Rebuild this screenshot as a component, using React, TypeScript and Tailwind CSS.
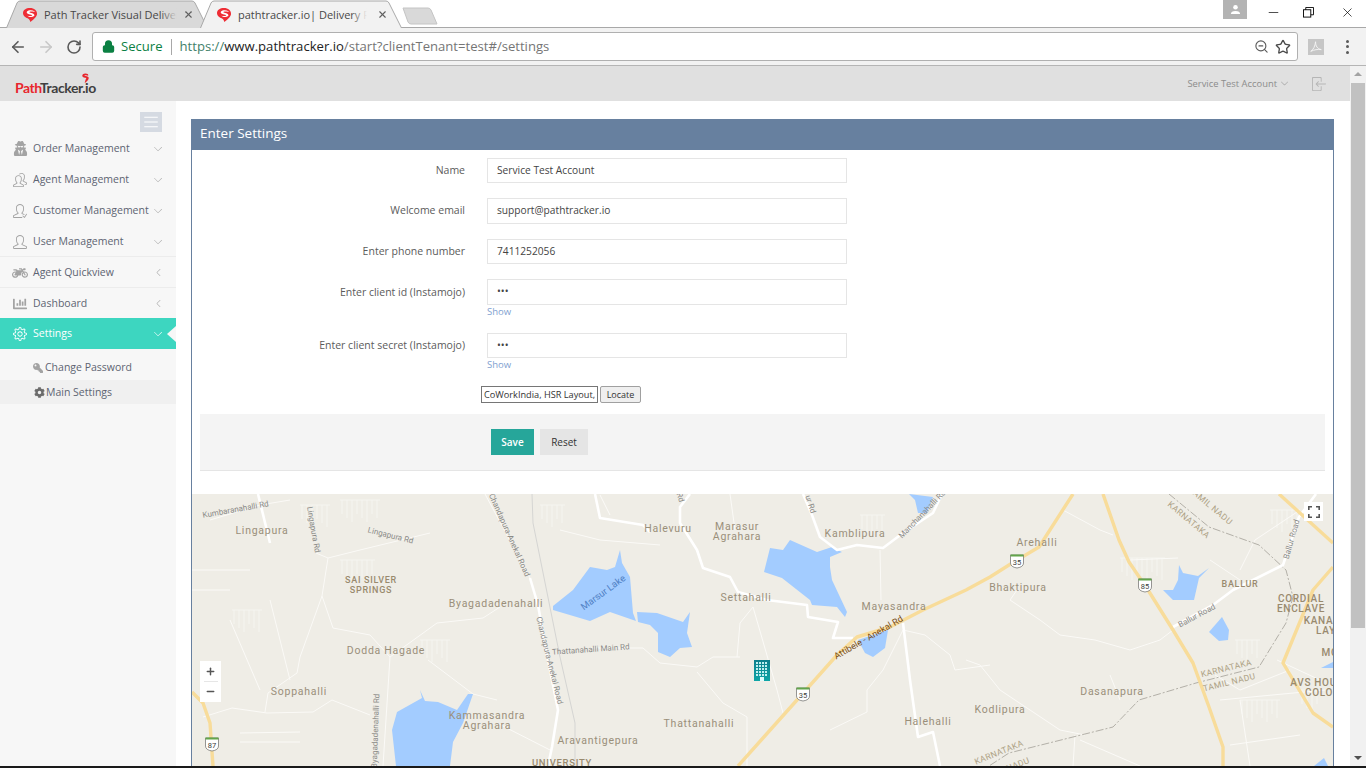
import { ArrowLeft, ArrowRight, RotateCw, Lock, ZoomOut, Star, Minus, Plus, X } from "lucide-react";
import {
  SlPeople,
  SlUserFollowing,
  SlUser,
  SlSettings,
  SlArrowDown,
  SlArrowLeft,
  SlMenu,
  SlLogin,
} from "react-icons/sl";
import { FaUserSecret, FaMotorcycle, FaChartBar, FaKey, FaCog } from "react-icons/fa";
import type { ReactNode } from "react";

const menu = [
  { label: "Order Management", icon: <FaUserSecret size={15} />, open: true, h: "h-[31px]" },
  { label: "Agent Management", icon: <SlPeople size={14} />, open: true, h: "h-[31px]" },
  { label: "Customer Management", icon: <SlUserFollowing size={14} />, open: true, h: "h-[31px]" },
  { label: "User Management", icon: <SlUser size={14} />, open: true, line: true, h: "h-[31px] pt-[1px]" },
  { label: "Agent Quickview", icon: <FaMotorcycle size={16} />, open: false, line: true, h: "h-[31px] pt-[1px]" },
  { label: "Dashboard", icon: <FaChartBar size={14} />, open: false, h: "h-[30px] pt-[1px]" },
];

const fields = [
  { label: "Name", value: "Service Test Account", h: "h-[25px]", mb: "mb-[15px]", pt: "pt-[4px]" },
  { label: "Welcome email", value: "support@pathtracker.io", h: "h-[26px]", mb: "mb-[15px]", pt: "pt-[4px]" },
  { label: "Enter phone number", value: "7411252056", h: "h-[25px]", mb: "mb-[15px]", pt: "pt-[4px]" },
  { label: "Enter client id (Instamojo)", value: "•••", h: "h-[26px]", mb: "mb-[15px]", pt: "pt-[5px]", show: true },
  { label: "Enter client secret (Instamojo)", value: "•••", h: "h-[25px]", mb: "mb-[15px]", pt: "pt-[4px]", show: true },
];

const lakes = [
  "590,567 607,570 615,567 620,550 622,563 630,577 633,613 636,621 610,612 590,621 553,610 553,606 573,590",
  "637,612 657,613 683,622 690,612 687,633 692,647 680,648 670,657 658,652 658,633 650,625 638,622",
  "770,548 783,550 790,540 817,552 832,547 842,552 830,557 830,567 832,580 847,612 845,617 837,607 812,605 810,600 782,578 764,572",
  "858,640 888,630 885,648 873,657 865,653",
  "909,494 933,497 927,513 918,513 915,500",
  "420,690 422,698 397,712 392,730 396,766 450,766 453,742 463,723 473,694 468,694 457,710 438,702 425,701",
  "1179,565 1183,573 1198,576 1209,568 1199,578 1194,600 1173,600 1163,590 1173,590 1178,580",
  "1222,617 1229,630 1228,640 1219,641 1209,632",
  "1321,668 1333,662 1333,668",
  "1314,766 1324,758 1328,766",
];

const highways = [
  "192,692 203,703 210,723 213,766",
  "738,766 797,700 837,655 857,637 890,627 923,610 966,590 990,577 1009,565 1039,547 1073,494",
  "1103,494 1119,540 1129,562 1148,590 1173,630 1193,663 1209,707 1223,747 1223,766",
  "1279,494 1333,543",
  "1333,567 1313,590 1283,663 1313,713 1333,727",
];

const mainRoads = [
  "258,494 270,543",
  "530,578 538,605 546,650 558,710 552,747 548,766",
  "595,494 600,518 643,525 650,532",
  "690,494 680,507 680,523 697,550 703,568 730,577 738,592 767,600 807,605 808,617 838,622 833,638 853,638",
  "803,494 812,515 820,537 837,550 857,545 883,548 903,533 933,513 942,494",
  "903,623 910,680 918,737 933,732 940,766",
  "1173,627 1213,605 1233,590 1283,565 1299,517 1316,494",
];

const thinRoads = [
  "485,494 530,578",
  "316,553 328,558 360,550 430,533",
  "328,558 322,596 333,628 370,635 390,657 383,766",
  "322,596 300,657 297,673 268,693 265,712",
  "203,717 232,708 267,713 313,712 332,700 370,715",
  "390,657 437,623 483,618 500,607",
  "428,660 473,694 497,700",
  "497,723 550,750",
  "240,733 300,732",
  "240,742 300,742",
  "590,648 643,648 660,663 697,667 713,657 740,657",
  "697,672 723,703 747,717 747,766",
  "753,607 740,623 737,657",
  "753,607 777,690 783,713",
  "880,550 881,600",
  "903,630 883,670 867,690 867,712 830,730",
  "903,630 925,635 950,655 955,670 990,665",
  "1063,510 1100,530 1113,535",
  "1017,590 1010,600 1040,620 1060,635 1095,640 1130,650 1160,640 1173,630",
  "966,660 980,665 1000,690 1060,730 1085,735",
  "1075,735 1073,766",
  "1080,740 1140,766",
  "1130,560 1178,558",
  "1215,675 1240,690 1290,670",
  "1220,700 1325,690",
  "1230,745 1300,735",
  "1240,700 1250,766",
  "1277,660 1320,680",
  "1240,570 1255,540 1300,510",
  "1210,560 1240,580",
  "210,520 260,505 290,500",
  "192,570 250,570",
  "192,590 230,590",
  "230,620 260,690",
  "270,600 290,680",
  "560,530 600,540 660,545",
  "600,495 610,515",
  "730,494 735,530",
  "1110,675 1120,700",
];

// short side streets, drawn as comb shapes
const combs = [
  [340, 500, 8],
  [300, 505, 6],
  [340, 560, 7],
  [232, 610, 6],
  [420, 640, 6],
  [540, 505, 5],
  [1120, 558, 9],
  [1235, 640, 5],
  [1270, 510, 6],
  [1240, 700, 8],
  [1300, 690, 4],
  [860, 515, 5],
];

const places = [
  ["Lingapura", 262, 534],
  ["Byagadadenahalli", 496, 607],
  ["Dodda Hagade", 386, 654],
  ["Soppahalli", 299, 695],
  ["Kammasandra", 487, 719],
  ["Agrahara", 487, 729],
  ["Aravantigepura", 598, 744],
  ["Halevuru", 668, 532],
  ["Marasur", 737, 530],
  ["Agrahara", 737, 540],
  ["Kamblipura", 855, 537],
  ["Settahalli", 746, 601],
  ["Mayasandra", 894, 610],
  ["Thattanahalli", 699, 727],
  ["Halehalli", 928, 725],
  ["Arehalli", 1037, 546],
  ["Bhaktipura", 1018, 591],
  ["Dasanapura", 1112, 695],
  ["Kodlipura", 1000, 713],
];

const districts: [string, number, number, number][] = [
  ["SAI SILVER", 371, 583, 9],
  ["SPRINGS", 371, 593, 9],
  ["BALLUR", 1240, 587, 9],
  ["CORDIAL", 1301, 602, 10],
  ["ENCLAVE", 1301, 612, 10],
  ["KANAK", 1322, 624, 10],
  ["LAY", 1326, 634, 10],
  ["MO", 1330, 656, 10],
  ["AVS HOUS", 1317, 686, 10],
  ["COLON", 1323, 696, 10],
  ["UNIVERSITY", 562, 766, 9.5],
];

const roadNames: [string, number, number, number][] = [
  ["Kumbaranahalli Rd", 236, 512, -10],
  ["Lingapura Rd", 311, 530, 80],
  ["Lingapura Rd", 390, 538, 14],
  ["Chandapura-Anekal Road", 507, 536, 66],
  ["Chandapura-Anekal Road", 547, 661, 76],
  ["Byagadadenahalli Rd", 378, 731, -88],
  ["Thattanahalli Main Rd", 591, 652, -4],
  ["Manchanahalli Rd", 924, 516, -46],
  ["Ballur Road", 1198, 618, -28],
  ["Ballur Road", 1294, 540, -74],
  ["ur Rd", 808, 505, 72],
  ["Rd", 678, 498, 72],
];

const borders: [string, number, number, number][] = [
  ["KARNATAKA", 1187, 522, 40],
  ["TAMIL NADU", 1209, 508, 40],
  ["KARNATAKA", 1227, 671, -14],
  ["TAMIL NADU", 1230, 685, -14],
  ["KARNATAKA", 1000, 755, -22],
  ["NADU", 1019, 767, -22],
];

const shields: [string, number, number][] = [
  ["35", 803, 694],
  ["35", 1017, 561],
  ["85", 1145, 585],
  ["87", 212, 744],
];

function MapDrawing() {
  return (
    <svg viewBox="192 494 1141 272" className="block h-full w-full" style={{ fontFamily: "Roboto, sans-serif" }}>
      <rect x="192" y="494" width="1141" height="272" fill="#efede6" />
      {combs.map(([x, y, n], i) => (
        <g key={i} stroke="#f8f7f2" strokeWidth="0.8" fill="none">
          <path d={`M${x} ${y}h${n * 5}`} />
          {Array.from({ length: n }).map((_, j) => (
            <path key={j} d={`M${x + j * 5 + 2} ${y}v${14 + (j % 3) * 4}`} />
          ))}
        </g>
      ))}
      {thinRoads.map((p, i) => (
        <polyline key={i} points={p} fill="none" stroke="#fbfaf7" strokeWidth="1" />
      ))}
      <polyline points="532,494 533,523 560,657 575,723 575,766" fill="none" stroke="#d5d5d3" strokeWidth="1" />
      <polyline
        points="1169,494 1209,527 1259,545 1286,570 1293,597 1286,623 1259,667 1196,683 1139,700 1113,727 1009,753 989,766"
        fill="none"
        stroke="#b3b0a8"
        strokeWidth="1"
        strokeDasharray="8 2 2 2"
      />
      {lakes.map((p, i) => (
        <polygon key={i} points={p} fill="#a3ccff" />
      ))}
      {mainRoads.map((p, i) => (
        <polyline key={i} points={p} fill="none" stroke="#ffffff" strokeWidth="2.6" strokeLinejoin="round" />
      ))}
      {highways.map((p, i) => (
        <polyline key={i} points={p} fill="none" stroke="#f8dc9a" strokeWidth="3.4" strokeLinejoin="round" />
      ))}
      <g fill="#9a8f7a" fontSize="10.5" letterSpacing="0.75" textAnchor="middle">
        {places.map(([t, x, y], i) => (
          <text key={i} x={x} y={y}>
            {t}
          </text>
        ))}
      </g>
      <g fill="#998a6e" fontWeight="500" letterSpacing="0.7" textAnchor="middle">
        {districts.map(([t, x, y, s], i) => (
          <text key={i} x={x} y={y} fontSize={s}>
            {t}
          </text>
        ))}
      </g>
      <g fill="#8a8a87" fontSize="8" textAnchor="middle">
        {roadNames.map(([t, x, y, r], i) => (
          <text key={i} x={x} y={y} transform={`rotate(${r} ${x} ${y})`}>
            {t}
          </text>
        ))}
      </g>
      <g fill="#ada184" fontSize="8.5" letterSpacing="0.4" textAnchor="middle">
        {borders.map(([t, x, y, r], i) => (
          <text key={i} x={x} y={y} transform={`rotate(${r} ${x} ${y})`}>
            {t}
          </text>
        ))}
      </g>
      <text x="605" y="595" fill="#4f80c4" fontSize="9.5" textAnchor="middle" transform="rotate(-36 605 595)">
        Marsur Lake
      </text>
      <text x="870" y="640" fill="#7a4d14" fontSize="9" textAnchor="middle" transform="rotate(-30 870 640)">
        Attibele - Anekal Rd
      </text>
      {shields.map(([t, x, y], i) => (
        <g key={i}>
          <path
            d={`M${x - 6.5} ${y - 6}h13v8q0 4-6.5 5q-6.5-1-6.5-5z`}
            fill="#ffffff"
            stroke="#7b7b78"
            strokeWidth="0.8"
          />
          <rect x={x - 6.5} y={y - 6.5} width="13" height="2" fill="#63a54b" />
          <text x={x} y={y + 3.5} fontSize="7.5" textAnchor="middle" fill="#3c3c3c">
            {t}
          </text>
        </g>
      ))}
      <defs>
        <linearGradient id="bld" x1="0" y1="0" x2="0" y2="1">
          <stop offset="0" stopColor="#0e7f8c" />
          <stop offset="1" stopColor="#0ea5a6" />
        </linearGradient>
      </defs>
      <rect x="754" y="660" width="16" height="21" fill="url(#bld)" />
      {[0, 1, 2, 3, 4].flatMap((r) =>
        [0, 1, 2, 3].map((c) => (
          <rect key={`${r}-${c}`} x={756 + c * 3} y={662 + r * 3} width="2" height="2" fill="#bfeff0" />
        )),
      )}
      <rect x="760" y="677" width="4" height="4" fill="#dffcfc" />
    </svg>
  );
}

function Favicon() {
  return (
    <svg viewBox="0 0 16 16" className="h-[16px] w-[16px] shrink-0">
      <path
        d="M8 1C4 1 1 3 1 6c0 3 2.500 4.500 5 5.500 1 .4 2 1.500 2.300 3.500C10 13.500 14 11 15 7.500 15.500 3.500 12 1 8 1z"
        fill="#ee2d35"
      />
      <path
        d="M12.500 4.200C10 3 6.500 3 5 4.500c-1 1.200.5 2.300 2 2.700 1.500.4 3 .6 3.300 1.300-1.300.7-3 .7-5 .2 1.700 1.500 5 1.800 6.800.3 1-1-.2-2.300-1.800-2.800-1.300-.4-2.800-.6-3-1.200 1.300-.6 3.200-.6 5.200 0z"
        fill="#ffffff"
      />
    </svg>
  );
}

function Tab({ title, active, z }: { title: string; active?: boolean; z: string }) {
  return (
    <div className={`relative -mr-[8px] h-[28px] w-[202px] shrink-0 ${z}`}>
      <svg viewBox="0 0 202 28" className="absolute inset-0 h-full w-full">
        <path
          d="M0.5 28 L11 3 Q12 1 14 1 H186 Q188 1 189 3 L201.5 28"
          fill={active ? "#f2f2f2" : "#d9d9d9"}
          stroke="#a8a8a8"
        />
      </svg>
      <div className="absolute left-[16px] top-[7px] flex items-center gap-[6px]">
        <Favicon />
        <div
          className={`relative overflow-hidden whitespace-nowrap text-[11px] leading-[16px] text-[#484848] ${active ? "w-[129px]" : "w-[133px]"}`}
        >
          {title}
          <div
            className={`absolute right-0 top-0 h-full w-[16px] bg-gradient-to-r from-transparent ${active ? "to-[#f2f2f2]" : "to-[#d9d9d9]"}`}
          />
        </div>
      </div>
      <X className="absolute right-[14px] top-[9px] text-[#5f5f5f]" size={11} strokeWidth={2.4} />
    </div>
  );
}

function BrowserChrome() {
  return (
    <>
      <div className="relative flex h-[28px] bg-white pl-[6px]">
        <div className="absolute inset-x-0 bottom-0 h-[1px] bg-[#a8a8a8]" />
        <Tab title="Path Tracker Visual Delivery" z="z-0" />
        <Tab title="pathtracker.io| Delivery Platform" active z="z-10" />
        <svg viewBox="0 0 36 18" className="z-0 ml-[8px] mt-[7px] h-[18px] w-[36px]">
          <path d="M1 1H26Q28 1 29 3L35 17H9Q7 17 6 15Z" fill="#d9d9d9" stroke="#c4c4c4" />
        </svg>
        <div className="ml-auto mr-[10px] flex items-start">
          <div className="mr-[17px] flex h-[19px] w-[24px] items-center justify-center bg-[#b3b3b3]">
            <svg viewBox="0 0 12 12" className="h-[11px] w-[11px]" fill="#ffffff">
              <circle cx="6" cy="3.5" r="2.5" />
              <path d="M1 11q0-3.500 5-3.500t5 3.500z" />
            </svg>
          </div>
          <div className="flex h-[24px] w-[39px] items-center justify-start pl-[2px] text-black">
            <Minus size={15} strokeWidth={1.1} />
          </div>
          <div className="flex h-[24px] w-[37px] items-center justify-start text-black">
            <svg viewBox="0 0 12 12" className="h-[11px] w-[11px]" fill="none" stroke="#000000">
              <rect x="0.5" y="3" width="8" height="8" />
              <path d="M3 3V.5h8.500V8.500H8.500" />
            </svg>
          </div>
          <div className="flex h-[24px] w-[16px] items-center justify-start text-black">
            <X size={15} strokeWidth={1.1} />
          </div>
        </div>
      </div>
      <div className="flex h-[38px] items-center border-b border-[#b5b5b5] bg-[#f2f2f2] pl-[9px]">
        <ArrowLeft size={18} strokeWidth={2.2} className="text-[#5a5a5a]" />
        <ArrowRight size={18} strokeWidth={2.2} className="ml-[10px] text-[#c8c8c8]" />
        <RotateCw size={16} strokeWidth={2.4} className="ml-[11px] text-[#5a5a5a]" />
        <div className="ml-[10px] flex h-[29px] w-[1206px] items-center rounded-[3px] border border-[#b0b0b0] bg-white pl-[9px] pr-[6px] text-[13.1px]">
          <Lock size={13} strokeWidth={3} fill="#0b8043" className="text-[#0b8043]" />
          <span className="ml-[6px] text-[#0b8043]">Secure</span>
          <span className="mx-[8px] h-[16px] w-[1px] bg-[#a8a8a8]" />
          <span className="text-[#3f7f6a]">https://</span>
          <span className="text-[#222222]">www.pathtracker.io</span>
          <span className="text-[#757575]">/start?clientTenant=test#/settings</span>
          <ZoomOut size={15} strokeWidth={1.8} className="ml-auto text-[#5a5a5a]" />
          <Star size={16} strokeWidth={2} className="ml-[6px] text-[#4a4a4a]" />
        </div>
        <div className="ml-[10px] flex h-[16px] w-[16px] items-center justify-center bg-[#c6c6c6]">
          <svg viewBox="0 0 16 16" className="h-[14px] w-[14px]" fill="none" stroke="#f4f4f4" strokeWidth="1.1">
            <path d="M2 13C5 11 7 7 7.500 2c0 5 2 8 6.500 9-4-.5-8 0-12 2z" />
          </svg>
        </div>
        <div className="ml-[22px] flex flex-col gap-[2.5px]">
          <span className="h-[3px] w-[3px] rounded-full bg-[#5a5a5a]" />
          <span className="h-[3px] w-[3px] rounded-full bg-[#5a5a5a]" />
          <span className="h-[3px] w-[3px] rounded-full bg-[#5a5a5a]" />
        </div>
      </div>
    </>
  );
}

function MenuRow({ label, icon, open, line, h }: { label: string; icon: ReactNode; open: boolean; line?: boolean; h: string }) {
  return (
    <div className={`flex items-center pl-[12px] pr-[14px] ${h} ${line ? "border-b border-[#ececec]" : ""}`}>
      <span className="flex w-[16px] justify-center text-[#a3a3a3]">{icon}</span>
      <span className="ml-[5px] whitespace-nowrap text-[10.5px] text-[#5d6472]">{label}</span>
      <span className="ml-auto text-[#a9a9a9]">{open ? <SlArrowDown size={8} /> : <SlArrowLeft size={7} />}</span>
    </div>
  );
}

function Sidebar() {
  return (
    <aside className="w-[176px] shrink-0 bg-[#f7f7f7]">
      <div className="flex h-[32px] items-start justify-end pr-[14px] pt-[11px]">
        <div className="flex h-[20px] w-[22px] items-center justify-center bg-[#d5dae2] text-white">
          <SlMenu size={14} />
        </div>
      </div>
      {menu.map((item) => (
        <MenuRow key={item.label} {...item} />
      ))}
      <div className="relative flex h-[31px] items-center bg-[#3dd6c0] pl-[12px] pr-[14px] text-white">
        <span className="flex w-[16px] justify-center">
          <SlSettings size={14} />
        </span>
        <span className="ml-[5px] text-[10.5px]">Settings</span>
        <span className="ml-auto">
          <SlArrowDown size={8} />
        </span>
        <span className="absolute right-0 top-[8px] h-0 w-0 border-y-[8px] border-r-[9px] border-y-transparent border-r-[#f7f7f7]" />
      </div>
      <div className="flex h-[31px] items-center pl-[33px] pt-[7px] text-[10.5px] text-[#5d6472]">
        <FaKey size={10} className="mr-[2px] -scale-x-100 text-[#a3a3a3]" />
        Change Password
      </div>
      <div className="flex h-[24px] items-center bg-[#f0f0f0] pl-[34px] pt-[1px] text-[10.5px] text-[#5d6472]">
        <FaCog size={11} className="mr-[1px] text-[#6b6b6b]" />
        Main Settings
      </div>
    </aside>
  );
}

function FormRow({ label, value, h, mb, pt, show }: { label: string; value: string; h: string; mb: string; pt: string; show?: boolean }) {
  return (
    <div className={`flex ${mb}`}>
      <label className={`w-[273px] text-right text-[10.5px] leading-[16px] text-[#5b5b5b] ${pt}`}>{label}</label>
      <div className="ml-[22px] w-[360px]">
        <div className={`flex items-center border border-[#e5e5e5] bg-white pl-[9px] text-[10.2px] text-[#444444] ${h}`}>
          {value}
        </div>
        {show && <div className="h-[13px] text-[9.5px] leading-[13px] text-[#7f9fd0]">Show</div>}
      </div>
    </div>
  );
}

function SettingsPanel() {
  return (
    <section className="flex h-[647px] flex-col border-x border-[#67809f]">
      <h2 className="flex h-[31px] items-center bg-[#67809f] pb-[3px] pl-[8px] text-[13.5px] font-normal text-white">
        Enter Settings
      </h2>
      <div className="pt-[8px]">
        {fields.map((f) => (
          <FormRow key={f.label} {...f} />
        ))}
      </div>
      <div className="flex items-center pl-[289px]">
        <div className="flex h-[17px] w-[117px] items-center overflow-hidden whitespace-nowrap border border-[#767676] bg-white pl-[2px] text-[9.2px] text-[#333333]">
          CoWorkIndia, HSR Layout,
        </div>
        <button
          type="button"
          className="ml-[2px] h-[17px] w-[41px] rounded-[2px] border border-[#a0a0a0] bg-[#efefef] text-center text-[9px] leading-[14px] text-[#333333]"
        >
          Locate
        </button>
      </div>
      <div className="mx-[8px] mt-[11px] flex h-[57px] items-start border-b border-[#e5e5e5] bg-[#f4f4f4] pl-[291px] pt-[15px]">
        <button type="button" className="h-[26px] w-[43px] bg-[#26a69a] text-[10px] font-semibold text-white">
          Save
        </button>
        <button type="button" className="ml-[6px] h-[26px] w-[48px] bg-[#e5e5e5] text-[10px] text-[#333333]">
          Reset
        </button>
      </div>
      <div className="relative mt-[23px] h-[272px]">
        <MapDrawing />
        <div className="absolute left-[8px] top-[167px] flex h-[41px] w-[21px] flex-col items-center justify-center bg-white text-[#555555]">
          <Plus size={11} strokeWidth={3.2} />
          <span className="my-[4px] h-[1px] w-[14px] bg-[#e6e6e6]" />
          <Minus size={11} strokeWidth={3.2} />
        </div>
        <div className="absolute right-[10px] top-[8px] flex h-[19px] w-[19px] items-center justify-center bg-white">
          <svg viewBox="0 0 12 12" className="h-[12px] w-[12px]" fill="none" stroke="#555555" strokeWidth="1.6">
            <path d="M.8 4V.8H4M8 .8h3.200V4M11.200 8v3.200H8M4 11.200H.8V8" />
          </svg>
        </div>
      </div>
    </section>
  );
}

export default function App() {
  return (
    <div className="flex h-[768px] w-[1366px] flex-col overflow-hidden bg-white font-['Open_Sans',sans-serif]">
      <BrowserChrome />
      <div className="flex h-[700px]">
        <div className="flex w-[1350px] flex-col">
          <header className="flex h-[35px] shrink-0 items-center bg-[#e0e0e0] pl-[15px] pr-[24px]">
            <div className="relative pt-[9px] font-['Lato',sans-serif] text-[14px] font-bold leading-[18px] tracking-[-0.45px] text-[#3f3f3f]">
              <span className="text-[#e8262d]">Path</span>Tracker.io
              <svg viewBox="0 0 10 12" className="absolute right-[6px] top-[3px] h-[11px] w-[9px]">
                <path d="M5 .5C2.500.5 1 2 1.500 3.500 2 5 4 5 6 5.500 5 7 5 8 4 11 7 9.500 9 7 8.500 5 8 3.500 5.500 3.500 3.500 3 5 2 7 2.500 8 3 8.500 1.500 7 .5 5 .5z" fill="#e8262d" />
              </svg>
            </div>
            <span className="ml-auto pt-[1px] text-[9.4px] text-[#8c8c8c]">Service Test Account</span>
            <SlArrowDown size={7} className="ml-[4px] text-[#8c8c8c]" />
            <SlLogin size={14} className="ml-[24px] -scale-x-100 text-[#b5b5b5]" />
          </header>
          <div className="flex min-h-0 flex-1">
            <Sidebar />
            <main className="min-w-0 flex-1 pl-[15px] pr-[16px] pt-[18px]">
              <SettingsPanel />
            </main>
          </div>
        </div>
        <div className="flex w-[16px] flex-col items-center bg-[#f1f1f1]">
          <span className="mt-[6px] h-0 w-0 border-x-[4px] border-b-[4px] border-x-transparent border-b-[#a3a3a3]" />
          <span className="mt-[7px] h-[545px] w-[14px] bg-[#c1c1c1]" />
          <span className="mb-[6px] mt-auto h-0 w-0 border-x-[4px] border-t-[4px] border-x-transparent border-t-[#505050]" />
        </div>
      </div>
      <div className="h-[2px] shrink-0 bg-[#1a1a1a]" />
    </div>
  );
}
